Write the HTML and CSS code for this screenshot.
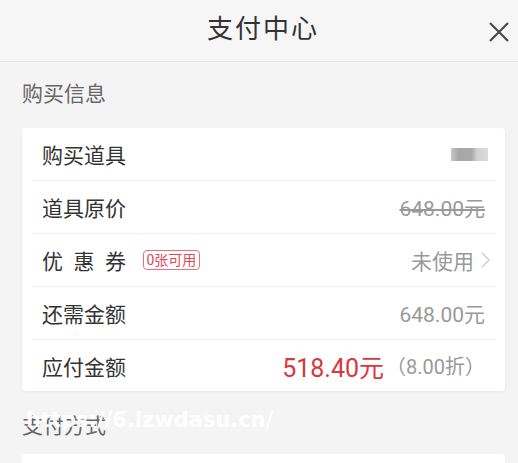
FILE: index.html
```html
<!DOCTYPE html>
<html lang="zh">
<head>
<meta charset="utf-8">
<link rel="stylesheet" href="styles.css">
</head>
<body>
<div class="page">
  <header class="header">
    <div class="title">支付中心</div>
    <svg class="close" width="22" height="22" viewBox="0 0 22 22"><path d="M2 2 L20 20 M20 2 L2 20" stroke="#4a4a4a" stroke-width="2.2" fill="none"/></svg>
  </header>
  <div class="section-title">购买信息</div>
  <div class="card">
    <div class="row">
      <span class="label">购买道具</span>
      <span class="blur"></span>
    </div>
    <div class="row">
      <span class="label">道具原价</span>
      <span class="value strike">648.00元</span>
    </div>
    <div class="row">
      <span class="label spaced">优惠券</span>
      <span class="badge">0张可用</span>
      <span class="value">未使用<svg class="chev" width="9" height="16" viewBox="0 0 9 16"><path d="M1 1 L8 8 L1 15" stroke="#c8c8c8" stroke-width="1.3" fill="none"/></svg></span>
    </div>
    <div class="row">
      <span class="label">还需金额</span>
      <span class="value">648.00元</span>
    </div>
    <div class="row">
      <span class="label">应付金额</span>
      <span class="value"><span class="price">518.40元</span><span class="disc">（8.00折）</span></span>
    </div>
  </div>
  <div class="section-title second">支付方式</div>
  <div class="card2"></div>
  <div class="watermark">https://6.lzwdasu.cn/</div>
</div>
</body>
</html>
```
FILE: styles.css
```css
* { box-sizing: border-box; }
html, body { margin: 0; padding: 0; }
body {
  background: #f4f4f4;
  font-family: "Roboto", "Noto Sans CJK SC", "Noto Sans", sans-serif;
  color: #333;
  width: 518px;
  height: 463px;
  overflow: hidden;
}
.page { position: relative; height: 463px; }
.header {
  height: 62px;
  background: #f6f6f6;
  border-bottom: 1px solid #e6e6e6;
  display: flex;
  align-items: center;
  justify-content: center;
  position: relative;
}
.title {
  font-size: 26px;
  color: #333;
  letter-spacing: 2px;
  margin-top: -8px;
  margin-left: 8px;
}
.close { position: absolute; right: 8px; top: 21px; }
.section-title {
  font-size: 21px;
  color: #666;
  padding: 14px 0 0 22px;
  height: 66px;
  line-height: 36px;
}
.section-title.second { height: 63px; padding-top: 17px; }
.card {
  margin: 0 13px 0 22px;
  background: #fff;
  border-radius: 4px;
  box-shadow: 0 1px 3px rgba(0,0,0,0.06);
  padding: 0 10px;
}
.row {
  height: 53px;
  display: flex;
  align-items: center;
  border-bottom: 1px solid #eeeeee;
  padding: 0 10px 0 10px;
}
.row:last-child { border-bottom: none; height: 51px; }
.label { font-size: 21px; color: #333; }
.label.spaced { letter-spacing: 10.5px; }
.value { margin-left: auto; font-size: 21px; color: #999; display: flex; align-items: center; }
.strike { text-decoration: line-through; }
.chev { margin-left: 7px; margin-right: -5px; }
.blur {
  margin-left: auto;
  width: 37px; height: 13px;
  background: linear-gradient(90deg, #c8c8c8 0%, #a8a8a8 20%, #a8a8a8 55%, #d0d0d0 70%, #dcdcdc 100%);
  filter: blur(0.6px);
  margin-right: -3px;
}
.badge {
  font-size: 14px;
  color: #e0475a;
  border: 1px solid #e8707e;
  border-radius: 4px;
  padding: 0 3px;
  line-height: 18px;
  margin-left: 6px;
}
.price { color: #d8373f; font-size: 25px; }
.disc { color: #999; font-size: 20px; margin-left: 2px; }
.card2 {
  margin: 0 13px 0 22px;
  background: #fff;
  height: 20px;
  border-radius: 4px;
}
.watermark {
  position: absolute;
  left: 26px;
  top: 408px;
  color: #fff;
  font-family: "DejaVu Sans", sans-serif;
  font-weight: bold;
  font-size: 21px;
  opacity: 0.92;
}
```
